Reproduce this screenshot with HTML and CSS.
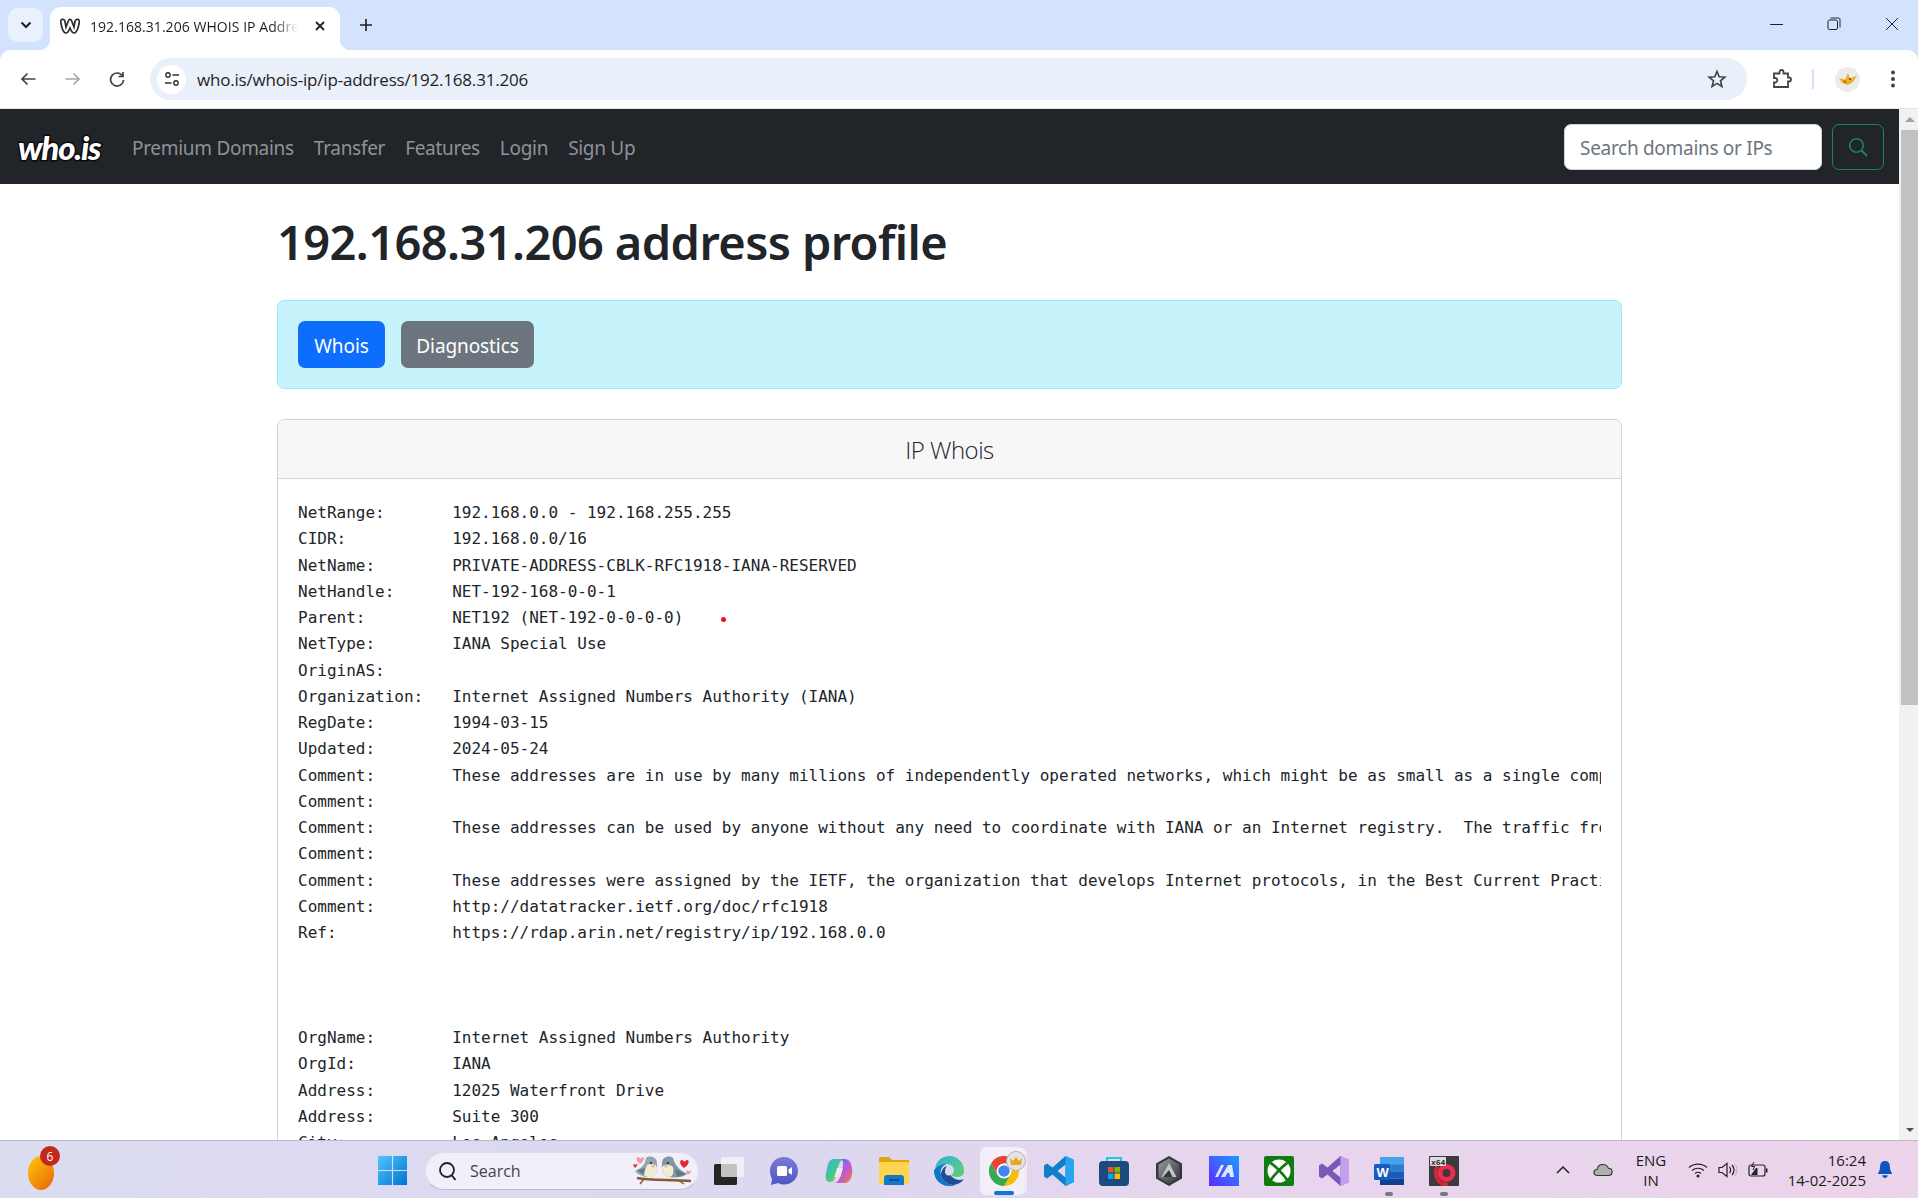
FILE: index.html
```html
<!DOCTYPE html>
<html lang="en">
<head>
<meta charset="utf-8">
<title>192.168.31.206 WHOIS IP Address</title>
<link rel="stylesheet" href="styles.css">
</head>
<body>
<div class="screen">
  <div class="chrome">
    <header class="tabstrip">
      <div class="tab-search"><svg width="12" height="8" viewBox="0 0 12 8"><path d="M1.500 1.500 6 6 10.500 1.500" fill="none" stroke="#1f1f1f" stroke-width="2"/></svg></div>
      <div class="tab">
        <svg class="favicon" width="20" height="16" viewBox="0 0 20 16"><path d="M1.500 1.500C.5 2 .5 4 1.500 8c1 4 2 7 4.500 7 1.500 0 3-2.500 4-5 1 2.500 2.500 5 4 5 2.500 0 3.500-3 4.500-7 1-4 1-6 0-6.500-1.500-.5-3 0-3.500 2L14 9 11.500 2.500C11 1 9 1 8.500 2.500L6 9 5 3.500C4.500 1.500 3 1 1.500 1.500Z" fill="#fff" stroke="#2b2b2b" stroke-width="1.700"/></svg>
        <span class="tab-title">192.168.31.206 WHOIS IP Address</span>
        <svg class="tab-close" width="12" height="12" viewBox="0 0 12 12"><path d="M2 2 10 10M10 2 2 10" stroke="#1f1f1f" stroke-width="1.800"/></svg>
      </div>
      <svg class="newtab" width="14" height="14" viewBox="0 0 14 14"><path d="M7 1V13M1 7H13" stroke="#1f1f1f" stroke-width="1.600"/></svg>
      <div class="winctl">
        <svg width="14" height="14" viewBox="0 0 14 14"><path d="M1 7.500H14" stroke="#222" stroke-width="1"/></svg>
        <svg width="14" height="14" viewBox="0 0 14 14"><rect x="1" y="3" width="9.500" height="9.500" rx="1.500" fill="none" stroke="#222"/><path d="M3.500 1H11.500A1.500 1.500 0 0 1 13 2.500V10.500" fill="none" stroke="#222"/></svg>
        <svg width="14" height="14" viewBox="0 0 14 14"><path d="M1 1 13 13M13 1 1 13" stroke="#222" stroke-width="1"/></svg>
      </div>
    </header>

    <div class="toolbar">
      <svg class="tool tool-back" width="18" height="18" viewBox="0 0 18 18"><path d="M16.500 9H3M8.500 3.500 3 9l5.500 5.500" fill="none" stroke="#444" stroke-width="1.700"/></svg>
      <svg class="tool tool-fwd" width="18" height="18" viewBox="0 0 18 18"><path d="M1.500 9H15M9.500 3.500 15 9l-5.500 5.500" fill="none" stroke="#a8a8a8" stroke-width="1.700"/></svg>
      <svg class="tool tool-reload" width="18" height="18" viewBox="0 0 18 18"><path d="M14.500 6A6.500 6.500 0 1 0 15.500 10M15 2V6.500H10.500" fill="none" stroke="#444" stroke-width="1.700"/></svg>
      <div class="omnibox">
        <span class="site-info"><svg width="16" height="16" viewBox="0 0 16 16"><circle cx="4" cy="4" r="2.200" fill="none" stroke="#333" stroke-width="1.400"/><path d="M8.500 4H15M1 12H7.500" stroke="#333" stroke-width="1.500"/><circle cx="12" cy="12" r="2.200" fill="none" stroke="#333" stroke-width="1.400"/></svg></span>
        <span class="url">who.is/whois-ip/ip-address/192.168.31.206</span>
        <svg class="star" width="20" height="20" viewBox="0 0 20 20"><path d="M10 2.500 12.200 7.800 17.800 8.200 13.500 11.900 14.900 17.400 10 14.400 5.100 17.400 6.500 11.900 2.200 8.200 7.800 7.800Z" fill="none" stroke="#444" stroke-width="1.700"/></svg>
      </div>
      <svg class="ext" width="20" height="20" viewBox="0 0 20 20"><path d="M2 4.500H7.500V3a2 2 0 0 1 4 0V4.500H16V8.500h1a2 2 0 0 1 0 4H16V18H2V13.500H3.500a2.300 2.300 0 0 0 0-4.500H2Z" fill="none" stroke="#444" stroke-width="1.800"/></svg>
      <span class="tool-sep"></span>
      <span class="avatar"><svg width="20" height="15" viewBox="0 0 20 15"><path d="M1 6 7 7.500 10 1 12 6.500 19 3.500 15 10 10 13 4 11Z" fill="#eeb02b"/><path d="M5 8 9 9.500 7 11Z" fill="#a8561a"/><circle cx="12" cy="7" r="1" fill="#5b3a12"/></svg></span>
      <svg class="menu" width="6" height="18" viewBox="0 0 6 18"><circle cx="3" cy="2.500" r="2" fill="#444"/><circle cx="3" cy="9" r="2" fill="#444"/><circle cx="3" cy="15.500" r="2" fill="#444"/></svg>
    </div>
  </div>

  <div class="viewport">
    <div class="page">
      <nav class="navbar">
        <span class="logo">who.is</span>
        <a class="nav-link">Premium Domains</a>
        <a class="nav-link">Transfer</a>
        <a class="nav-link">Features</a>
        <a class="nav-link">Login</a>
        <a class="nav-link">Sign Up</a>
        <span class="nav-spacer"></span>
        <span class="search-input">Search domains or IPs</span>
        <span class="search-btn"><svg width="20" height="20" viewBox="0 0 20 20"><circle cx="8.500" cy="8.500" r="6.800" fill="none" stroke="#198754" stroke-width="1.600"/><path d="M13.500 13.500 19 19" stroke="#198754" stroke-width="2"/></svg></span>
      </nav>
      <main class="container">
        <h1 class="title">192.168.31.206 address profile</h1>
        <div class="alert">
          <span class="btn btn-blue">Whois</span>
          <span class="btn btn-grey">Diagnostics</span>
        </div>
        <section class="card">
          <div class="card-head">IP Whois</div>
          <div class="card-body">
            <pre class="whois">NetRange:       192.168.0.0 - 192.168.255.255
CIDR:           192.168.0.0/16
NetName:        PRIVATE-ADDRESS-CBLK-RFC1918-IANA-RESERVED
NetHandle:      NET-192-168-0-0-1
Parent:         NET192 (NET-192-0-0-0-0)
NetType:        IANA Special Use
OriginAS:
Organization:   Internet Assigned Numbers Authority (IANA)
RegDate:        1994-03-15
Updated:        2024-05-24
Comment:        These addresses are in use by many millions of independently operated networks, which might be as small as a single computer connected to a home gateway
Comment:
Comment:        These addresses can be used by anyone without any need to coordinate with IANA or an Internet registry.  The traffic from these addresses does not come from IANA
Comment:
Comment:        These addresses were assigned by the IETF, the organization that develops Internet protocols, in the Best Current Practice document
Comment:        http://datatracker.ietf.org/doc/rfc1918
Ref:            https://rdap.arin.net/registry/ip/192.168.0.0



OrgName:        Internet Assigned Numbers Authority
OrgId:          IANA
Address:        12025 Waterfront Drive
Address:        Suite 300
City:           Los Angeles</pre>
          </div>
          <span class="red-dot"></span>
        </section>
      </main>
    </div>
    <div class="scrollbar">
      <span class="arrow arrow-up"></span>
      <span class="thumb"></span>
      <span class="track"></span>
      <span class="arrow arrow-down"></span>
    </div>
  </div>

  <footer class="taskbar">
    <div class="task-left">
      <span class="widget"><span class="badge">6</span></span>
    </div>
    <div class="task-center">
      <svg class="tb-win" width="29" height="29" viewBox="0 0 30 30"><defs><linearGradient id="w" x1="0" y1="0" x2="1" y2="1"><stop offset="0" stop-color="#4fc7fb"/><stop offset="1" stop-color="#0072d2"/></linearGradient></defs><path d="M0 0H14.400V14.400H0ZM15.600 0H30V14.400H15.600ZM0 15.600H14.400V30H0ZM15.600 15.600H30V30H15.600Z" fill="url(#w)"/></svg>
      <div class="tb-search">
        <svg width="20" height="20" viewBox="0 0 20 20"><circle cx="9" cy="9" r="7" fill="none" stroke="#222" stroke-width="1.800"/><path d="M13.500 14 17.500 19" stroke="#222" stroke-width="2"/></svg>
        <span class="tb-search-text">Search</span>
        <svg class="birds" width="62" height="32" viewBox="0 0 62 32"><path d="M5 23C20 26 40 24 59 26" fill="none" stroke="#8a5a33" stroke-width="2.500"/><path d="M12 24 8 29M46 25 52 29" stroke="#8a5a33" stroke-width="1.500"/><path d="M14 3C18 0 25 2 25 8 26 15 24 22 18 22 12 22 6 20 3 16 8 14 13 11 14 3Z" fill="#93a6b0"/><path d="M30 8C30 2 37 0 41 3 43 11 48 15 55 19 50 23 42 23 37 22 31 21 29 14 30 8Z" fill="#7f97a5"/><path d="M15 10C19 8 25 9 25 13 25 19 22 22 18 22 14 22 11 20 11 18 13 16 14 13 15 10Z" fill="#f3ecd2"/><path d="M30 12C30 18 33 21 37 22 41 22 42 17 41 12 38 9 32 9 30 12Z" fill="#f3ecd2"/><path d="M5 15 13 13 12 20Z" fill="#5f7886"/><path d="M43 14 54 19 45 22Z" fill="#5f7886"/><circle cx="19" cy="8" r="1" fill="#222"/><circle cx="36" cy="8" r="1" fill="#222"/><circle cx="21" cy="11" r="1.500" fill="#f3a9a9"/><circle cx="34" cy="11" r="1.500" fill="#f3a9a9"/><path d="M8 9C4 6 4 2 6 2 7 2 8 3 8.500 4 9 3 10 2 11 2 13 3 12 6 8 9Z" fill="#f59aa3"/><path d="M3 13C1 11 1 9 2 9 2.500 9 3 9.500 3.500 10 4 9.500 4.500 9 5 9 6 9 5.500 11 3 13Z" fill="#e5333f"/><path d="M52 13C48 10 47 6 49.500 5 51 5 52 6 52.500 7 53 6 54 5 55.500 5 58 6 56.500 10 52 13Z" fill="#e5262f"/><path d="M56 20C54 18 53.500 16 55 15.500 55.500 15.500 56 16 56.500 16.500 57 16 57.500 15.500 58 15.500 60 16 58.500 18 56 20Z" fill="#f29aa0"/></svg>
      </div>
      <div class="tb-apps">
        <div class="tb-slot"><svg width="30" height="30" viewBox="0 0 30 30"><rect x="0" y="8" width="23" height="21" rx="1.500" fill="#252525"/><rect x="7" y="1" width="23" height="20" rx="1.500" fill="#f7f6f8" opacity=".75"/></svg></div>
        <div class="tb-slot"><svg width="30" height="30" viewBox="0 0 30 30"><defs><linearGradient id="t" x1="0" y1="0" x2="0" y2="1"><stop offset="0" stop-color="#7b7ad8"/><stop offset="1" stop-color="#4e56c4"/></linearGradient></defs><path d="M15 1C7 1 1 7 1 15c0 3 1 6 2 8L2 29l7-2c2 1 4 1.500 6 1.500 8 0 14-6 14-13.500S23 1 15 1Z" fill="url(#t)"/><rect x="8" y="10" width="10" height="10" rx="1.500" fill="#fff"/><path d="M19.500 13.500 23 11V19L19.500 16.500Z" fill="#fff"/></svg></div>
        <div class="tb-slot"><svg width="30" height="30" viewBox="0 0 30 30"><defs><linearGradient id="c1" x1="0" y1="0" x2="1" y2="1"><stop offset="0" stop-color="#2fb8e0"/><stop offset=".55" stop-color="#47c78a"/><stop offset="1" stop-color="#e9d437"/></linearGradient><linearGradient id="c2" x1="0" y1="0" x2="1" y2="1"><stop offset="0" stop-color="#3a6ff0"/><stop offset=".5" stop-color="#b45ae0"/><stop offset="1" stop-color="#f57b3a"/></linearGradient></defs><path d="M10 3H19C16 5 15 8 14 11L11 22C10 25 8 26 6 26 2 26 1 22 2 17L4 8C5 5 7 3 10 3Z" fill="url(#c1)"/><path d="M20 3C25 3 27 6 28 12 29 19 27 27 20 27H11C14 26 15 24 16 21L19 10C19.500 7 19 4 17 3Z" fill="url(#c2)"/><path d="M13 12H19L16.500 21H10.500Z" fill="#f3e6ee"/></svg></div>
        <div class="tb-slot"><svg width="30" height="30" viewBox="0 0 30 30"><path d="M0 3C0 2 1 1 2 1H10L13 4H30V28H0Z" fill="#e3a40c"/><path d="M0 6H28C29 6 30 7 30 8V28H0Z" fill="#fdd64d"/><path d="M5 29V22C5 20 6 19 8 19H22C24 19 25 20 25 22V29Z" fill="#1378c8"/><path d="M10 24H20" stroke="#0c3f73" stroke-width="1.500"/></svg></div>
        <div class="tb-slot"><svg width="30" height="30" viewBox="0 0 30 30"><defs><linearGradient id="e1" x1="0" y1="0" x2="1" y2="1"><stop offset="0" stop-color="#2fb5dc"/><stop offset="1" stop-color="#5dd36b"/></linearGradient></defs><path d="M1 13C2 5 8 0 15.500 0 23 0 30 6 30 15c0 4-3 6-7 6-3 0-5-1-6-2 2-1 3-2.500 3-4.500C20 10 16 8 12.500 8 7 8 3 10 1 13Z" fill="url(#e1)"/><path d="M1 13C3 10 7 8 12.500 8 7 10 6 15 7 19c1 6 7 10 13 10l1 0C19 30 17 30 15 30 6 30 0 23 0 15c0-1 0-1.500 1-2Z" fill="#0d78c9"/><path d="M17 19c-2 1-6 1-6-4 0-2 1-4 2-5-4 1-6 5-6 9 1 6 7 10 13 10 5-1 8-3 10-6-4 2-9 1-13-3Z" fill="#1a4f9c"/></svg></div>
        <div class="tb-slot">
          <span class="tb-active"><span class="active-pill"></span></span>
          <svg class="chrome-logo" width="30" height="30" viewBox="0 0 30 30"><path d="M2 7.500A15 15 0 0 1 28 7.500H15L8.500 18.750Z" fill="#ea4335"/><path d="M28 7.500A15 15 0 0 1 15 30L21.500 18.750 15 7.500Z" fill="#fbbc05"/><path d="M15 30A15 15 0 0 1 2 7.500L8.500 18.750 21.500 18.750Z" fill="#34a853"/><circle cx="15" cy="15" r="7.500" fill="#fff"/><circle cx="15" cy="15" r="5.800" fill="#4285f4"/></svg>
          <span class="crown"><svg width="14" height="10" viewBox="0 0 14 10"><path d="M1 2 4 5 7 1 10 5 13 2 12 9H2Z" fill="#e6a91e"/></svg></span>
        </div>
        <div class="tb-slot"><svg width="30" height="30" viewBox="0 0 30 30"><path d="M21.500 0 30 4V26L21.500 30 8.500 18.500 3 22.500 0 20.500V9.500L3 7.500 8.500 11.500ZM21.500 8.500 13.500 15 21.500 21.500Z" fill-rule="evenodd" fill="#0f7fc9"/><path d="M21.500 0 30 4V26L21.500 30Z" fill="#25a6ee"/></svg></div>
        <div class="tb-slot"><svg width="30" height="30" viewBox="0 0 30 30"><path d="M8 6V2H22V6" fill="none" stroke="#2ac3de" stroke-width="2"/><rect y="5" width="30" height="25" rx="4" fill="#1a4a7e"/><path d="M9 11H14.500V16.500H9Z" fill="#f25022"/><path d="M15.500 11H21V16.500H15.500Z" fill="#7fba00"/><path d="M9 17.500H14.500V23H9Z" fill="#00a4ef"/><path d="M15.500 17.500H21V23H15.500Z" fill="#ffb900"/></svg></div>
        <div class="tb-slot"><svg width="30" height="30" viewBox="0 0 30 30"><defs><linearGradient id="wf" x1="0" y1="0" x2="1" y2="1"><stop offset="0" stop-color="#9a9fa3"/><stop offset="1" stop-color="#2f3236"/></linearGradient></defs><path d="M15 0 28 7.500V22.500L15 30 2 22.500V7.500Z" fill="#33373b"/><path d="M15 2.500 25.500 8.500V21.500L15 27.500 4.500 21.500V8.500Z" fill="url(#wf)"/><path d="M15 7 22.500 21H7.500Z" fill="#c2c6ca"/><path d="M15 14 18.500 21H9Z" fill="#33373b"/></svg></div>
        <div class="tb-slot"><svg width="30" height="30" viewBox="0 0 30 30"><defs><linearGradient id="m" x1="0" y1="1" x2="1" y2="0"><stop offset="0" stop-color="#6128ff"/><stop offset="1" stop-color="#1a9cff"/></linearGradient></defs><rect width="30" height="30" fill="url(#m)"/><path d="M6 21 12 9H15L9 21ZM12 21 19 9H23L25 21H21L20.500 17H18.500L20 14 16 21Z" fill="#fff" opacity=".85"/></svg></div>
        <div class="tb-slot"><svg width="30" height="30" viewBox="0 0 30 30"><rect width="30" height="30" rx="2" fill="#107c10"/><circle cx="15" cy="15" r="11.500" fill="#fff"/><path d="M6.500 7C11 9.500 20 19 23.500 24.500M23.500 7C19 9.500 10 19 6.500 24.500" fill="none" stroke="#107c10" stroke-width="2.800"/></svg></div>
        <div class="tb-slot"><svg width="30" height="30" viewBox="0 0 30 30"><path d="M21.500 0 30 4V26L21.500 30 8.500 18.500 3 22.500 0 20.500V9.500L3 7.500 8.500 11.500ZM21.500 8.500 13.500 15 21.500 21.500Z" fill-rule="evenodd" fill="#7b58b8"/><path d="M21.500 0 30 4V26L21.500 30V21.500L21.500 8.500Z" fill="#c69ff0"/></svg></div>
        <div class="tb-slot">
          <svg width="30" height="30" viewBox="0 0 30 30"><rect x="6" y="1" width="24" height="7.200" fill="#41a5ee"/><rect x="6" y="8.200" width="24" height="7.200" fill="#2b7cd3"/><rect x="6" y="15.400" width="24" height="7.200" fill="#185abd"/><rect x="6" y="22.600" width="24" height="6.400" fill="#103f91"/><rect x="0" y="8" width="16" height="16" rx="1.500" fill="#185abd"/><text x="2.500" y="20.500" class="word-w">W</text></svg>
          <span class="open-pill"></span>
        </div>
        <div class="tb-slot">
          <svg width="30" height="30" viewBox="0 0 30 30"><rect width="30" height="30" rx="1" fill="#3a3a3f"/><circle cx="17.500" cy="17" r="6.500" fill="none" stroke="#ef2b4c" stroke-width="5"/><path d="M8 10C4 20 10 30 19 28" fill="none" stroke="#d02a30" stroke-width="3.500"/><rect x="1" y="1" width="16" height="9" rx="1" fill="#ddd"/><text x="2" y="8.500" class="x64">x64</text></svg>
          <span class="open-pill"></span>
        </div>
      </div>
    </div>
    <div class="tray">
      <svg class="tray-chevron" width="14" height="10" viewBox="0 0 14 10"><path d="M1 8 7 2 13 8" fill="none" stroke="#222" stroke-width="1.500"/></svg>
      <svg class="tray-cloud" width="20" height="14" viewBox="0 0 22 14"><path d="M5 13C2 13 1 11 1 9.500S2 6.500 4.500 6.500C5 3 8 1 11 1c3 0 5 2 6 4 2.500 0 4 2 4 4s-1.500 4-4 4Z" fill="#aeb0ae" stroke="#333" stroke-width="1.200"/></svg>
      <div class="lang"><span>ENG</span><span>IN</span></div>
      <div class="tray-icons">
        <svg width="20" height="16" viewBox="0 0 20 16"><path d="M1 5.500C6 1 14 1 19 5.500M4 8.500c3.500-3 8.500-3 12 0M7 11.500c1.800-1.500 4.200-1.500 6 0" fill="none" stroke="#222" stroke-width="1.200"/><circle cx="10" cy="14" r="1.500" fill="#222"/></svg>
        <svg width="20" height="16" viewBox="0 0 20 16"><path d="M1 5.500H4L9 1.500V14.500L4 10.500H1Z" fill="none" stroke="#222" stroke-width="1.200"/><path d="M11.500 5C13 6.500 13 9.500 11.500 11M14 3C16.500 6 16.500 10 14 13" fill="none" stroke="#222" stroke-width="1.200"/><path d="M17 2C19.500 6 19.500 10 17 14" fill="none" stroke="#b9b0c0" stroke-width="1"/></svg>
        <svg width="20" height="16" viewBox="0 0 20 16"><rect x="1" y="3" width="16" height="11" rx="2" fill="none" stroke="#222" stroke-width="1.200"/><path d="M18 6.500H19.500V10.500H18Z" fill="#222"/><path d="M3 13 8 6H9.500V13Z" fill="#222"/><path d="M6 0 3.500 4.500H6.500L5 8" fill="none" stroke="#222"/></svg>
      </div>
      <div class="clock"><span>16:24</span><span>14-02-2025</span></div>
      <svg class="bell" width="16" height="20" viewBox="0 0 18 20"><path d="M9 0C5 0 3.500 3 3.500 6.500 3.500 10 1.500 12.500 1 14.500H17C16.500 12.500 14.500 10 14.500 6.500 14.500 3 13 0 9 0Z" fill="#0f55c2"/><path d="M6 16H12C12 18 10.500 19 9 19S6 18 6 16Z" fill="#0f55c2"/></svg>
    </div>
  </footer>
</div>
</body>
</html>
```

FILE: styles.css
```css
* { box-sizing: border-box; }
html, body { margin: 0; padding: 0; }
body { font-family: "Noto Sans", "Open Sans", sans-serif; color: #212529; overflow: hidden; }
.screen { width: 1918px; height: 1198px; display: flex; flex-direction: column; overflow: hidden; background: #fff; }

/* Browser chrome */
.chrome { flex: none; background: #d3e3fd; }
.tabstrip { height: 50px; display: flex; align-items: flex-start; padding: 8px 0 0 8px; font-family: "Open Sans", sans-serif; }
.tab-search { width: 35px; height: 34px; flex: none; border-radius: 10px; background: #e9f1fe; display: flex; align-items: center; justify-content: center; }
.tab { position: relative; width: 290px; height: 43px; flex: none; margin: -1px 0 0 7px; background: #fff; border-radius: 11px 11px 0 0; display: flex; align-items: center; padding: 0 0 5px 10px; }
.tab::before, .tab::after { content: ""; position: absolute; bottom: 0; width: 11px; height: 11px; }
.tab::before { left: -11px; background: radial-gradient(circle at 0 0, #d3e3fd 11px, #fff 11.500px); }
.tab::after { right: -11px; background: radial-gradient(circle at 100% 0, #d3e3fd 11px, #fff 11.500px); }
.favicon { flex: none; }
.tab-title { width: 208px; flex: none; margin-left: 10px; font-size: 14px; letter-spacing: 0.05px; white-space: nowrap; overflow: hidden; color: #1f1f1f; -webkit-mask-image: linear-gradient(to right, #000 88%, transparent 100%); mask-image: linear-gradient(to right, #000 88%, transparent 100%); }
.tab-close { flex: none; margin-left: 16px; }
.newtab { flex: none; margin: 10px 0 0 19px; }
.winctl { margin-left: auto; padding-top: 9px; display: flex; gap: 44px; padding-right: 19px; }

.toolbar { height: 59px; background: #fff; border-bottom: 1px solid #e4e4e4; border-radius: 11px 11px 0 0; display: flex; align-items: center; padding-left: 19px; }
.tool { flex: none; }
.tool-fwd { margin-left: 27px; }
.tool-reload { margin-left: 26px; }
.omnibox { width: 1597px; height: 42px; flex: none; margin-left: 24px; border-radius: 21px; background: #e9f0fa; display: flex; align-items: center; padding: 0 20px 0 7px; }
.site-info { width: 29px; height: 29px; flex: none; border-radius: 50%; background: #fff; display: flex; align-items: center; justify-content: center; }
.url { margin-left: 11px; font-size: 17px; letter-spacing: -0.2px; color: #1f1f1f; font-family: "Open Sans", sans-serif; }
.star { margin-left: auto; flex: none; }
.ext { margin-left: 25px; flex: none; }
.tool-sep { width: 2px; height: 20px; background: #d3e3fd; margin-left: 20px; flex: none; }
.avatar { width: 25px; height: 25px; border-radius: 50%; background: #ececec; margin-left: 21px; display: flex; align-items: center; justify-content: center; flex: none; }
.menu { margin-left: 30px; flex: none; }

/* Page */
.viewport { flex: 1; min-height: 0; display: flex; }
.page { flex: 1; min-width: 0; overflow: hidden; }
.navbar { height: 75px; background: #212529; display: flex; align-items: center; padding: 0 15px 0 18px; }
.logo { width: 82px; margin-right: 22px; font-family: "Lato", sans-serif; font-weight: 900; font-style: italic; font-size: 33px; letter-spacing: -1.200px; color: #fff; -webkit-text-stroke: 3px #0b0b0b; paint-order: stroke fill; white-space: nowrap; }
.nav-link { font-size: 19px; letter-spacing: -0.3px; color: #8f9296; padding: 2px 10px 0; white-space: nowrap; }
.nav-spacer { flex: 1; }
.search-input { width: 258px; height: 46px; flex: none; background: #fff; border: 1px solid #ced4da; border-radius: 7px; display: flex; align-items: center; padding: 2px 0 0 15px; font-size: 19px; letter-spacing: -0.3px; color: #6c757d; white-space: nowrap; }
.search-btn { width: 52px; height: 46px; flex: none; margin-left: 10px; border: 1px solid #198754; border-radius: 7px; display: flex; align-items: center; justify-content: center; }

.container { width: 1345px; margin: 0 auto; }
.title { margin: 0; padding-top: 27px; height: 116px; font-size: 47px; line-height: 62px; font-weight: 600; color: #212529; letter-spacing: -0.6px; white-space: nowrap; }
.alert { height: 89px; background: #c7f3fc; border: 1px solid #9eeaf9; border-radius: 7px; display: flex; align-items: center; padding: 0 20px; gap: 16px; }
.btn { height: 47px; padding-top: 2px; border-radius: 7px; color: #fff; font-size: 19px; letter-spacing: -0.1px; display: flex; align-items: center; justify-content: center; }
.btn-blue { width: 87px; background: #0d6efd; }
.btn-grey { width: 133px; background: #6c757d; }
.card { position: relative; margin-top: 30px; border: 1px solid #d3d3d3; border-radius: 7px; height: 800px; }
.card-head { height: 59px; background: #f7f7f7; border-bottom: 1px solid #d3d3d3; border-radius: 7px 7px 0 0; display: flex; align-items: center; justify-content: center; font-family: "Open Sans", sans-serif; font-size: 24px; letter-spacing: -0.5px; font-weight: 300; color: #212529; }
.card-body { padding: 21px 20px 20px; }
.whois { margin: 0; font-family: "DejaVu Sans Mono", monospace; font-size: 16px; line-height: 26.250px; color: #212529; overflow: hidden; }
.red-dot { position: absolute; left: 443px; top: 197px; width: 5px; height: 5px; border-radius: 50%; background: #e8112d; }

.scrollbar { width: 19px; flex: none; background: #f1f1f1; display: flex; flex-direction: column; }
.arrow { height: 21px; flex: none; display: flex; justify-content: center; align-items: center; padding-left: 2px; }
.arrow-up::before { content: ""; border: 5px solid transparent; border-top: 0; border-bottom: 5px solid #a3a3a3; }
.arrow-down::before { content: ""; border: 4px solid transparent; border-bottom: 0; border-top: 4px solid #505050; }
.thumb { height: 575px; flex: none; background: #c1c1c1; margin-left: 2px; }
.track { flex: 1; }

/* Taskbar */
.taskbar { height: 58px; flex: none; border-top: 1px solid #bdb7cf; background: linear-gradient(90deg, #dcdcf1 0%, #dbd8ef 40%, #e5d6ee 60%, #ecd4ea 100%); display: flex; align-items: center; font-family: "Open Sans", sans-serif; }
.task-left { width: 378px; flex: none; padding-left: 28px; }
.widget { display: block; position: relative; width: 26px; height: 34px; margin-top: 7px; border-radius: 50%; background: linear-gradient(135deg, #ffc905, #e8640e); }
.badge { position: absolute; left: 12px; top: -10px; width: 20px; height: 20px; border-radius: 50%; background: #c4281d; color: #fff; font-size: 12px; display: flex; align-items: center; justify-content: center; }
.task-center { display: flex; align-items: center; }
.tb-win { flex: none; margin-top: 2px; }
.tb-search { width: 274px; height: 38px; flex: none; margin-left: 18px; margin-top: 2px; border-radius: 19px; background: #f1effa; border: 1px solid #dedbea; border-bottom-color: #bdb9ce; display: flex; align-items: center; padding: 0 4px 0 12px; }
.tb-search-text { margin-left: 12px; font-size: 16px; color: #444; flex: 1; }
.birds { flex: none; }
.tb-apps { display: flex; gap: 25px; margin-left: 15px; margin-top: 2px; }
.tb-slot { position: relative; width: 30px; height: 30px; flex: none; }
.tb-slot > svg { display: block; position: relative; }
.tb-active { position: absolute; left: -9px; top: -9px; width: 44px; height: 48px; border-radius: 6px; background: #f2eff9; box-shadow: 4px 0 0 -1px #efebf5; }
.active-pill { position: absolute; left: 14px; bottom: 0; width: 20px; height: 4px; border-radius: 2px; background: #0a78d6; }
.crown { position: absolute; left: 17px; top: -5px; width: 20px; height: 20px; border-radius: 50%; background: #e6e2e6; border: 1px solid #b5b0b5; display: flex; align-items: center; justify-content: center; }
.open-pill { position: absolute; left: 11px; top: 36px; width: 8px; height: 4px; border-radius: 2px; background: #7a7580; }
.word-w { font-family: "Liberation Sans", sans-serif; font-weight: 700; font-size: 13px; fill: #fff; }
.x64 { font-family: "Liberation Mono", monospace; font-weight: 700; font-size: 8px; fill: #222; }

.tray { margin-left: auto; width: 362px; flex: none; display: flex; align-items: center; color: #1c1c1c; }
.tray-chevron { flex: none; }
.tray-cloud { flex: none; margin-left: 23px; }
.lang { margin-left: 22px; width: 32px; display: flex; flex-direction: column; align-items: center; font-size: 15px; line-height: 20px; }
.tray-icons { margin-left: 21px; display: flex; gap: 10px; }
.clock { margin-left: 20px; width: 78px; display: flex; flex-direction: column; align-items: flex-end; font-size: 15px; line-height: 20px; white-space: nowrap; }
.bell { margin-left: 11px; flex: none; }
```
